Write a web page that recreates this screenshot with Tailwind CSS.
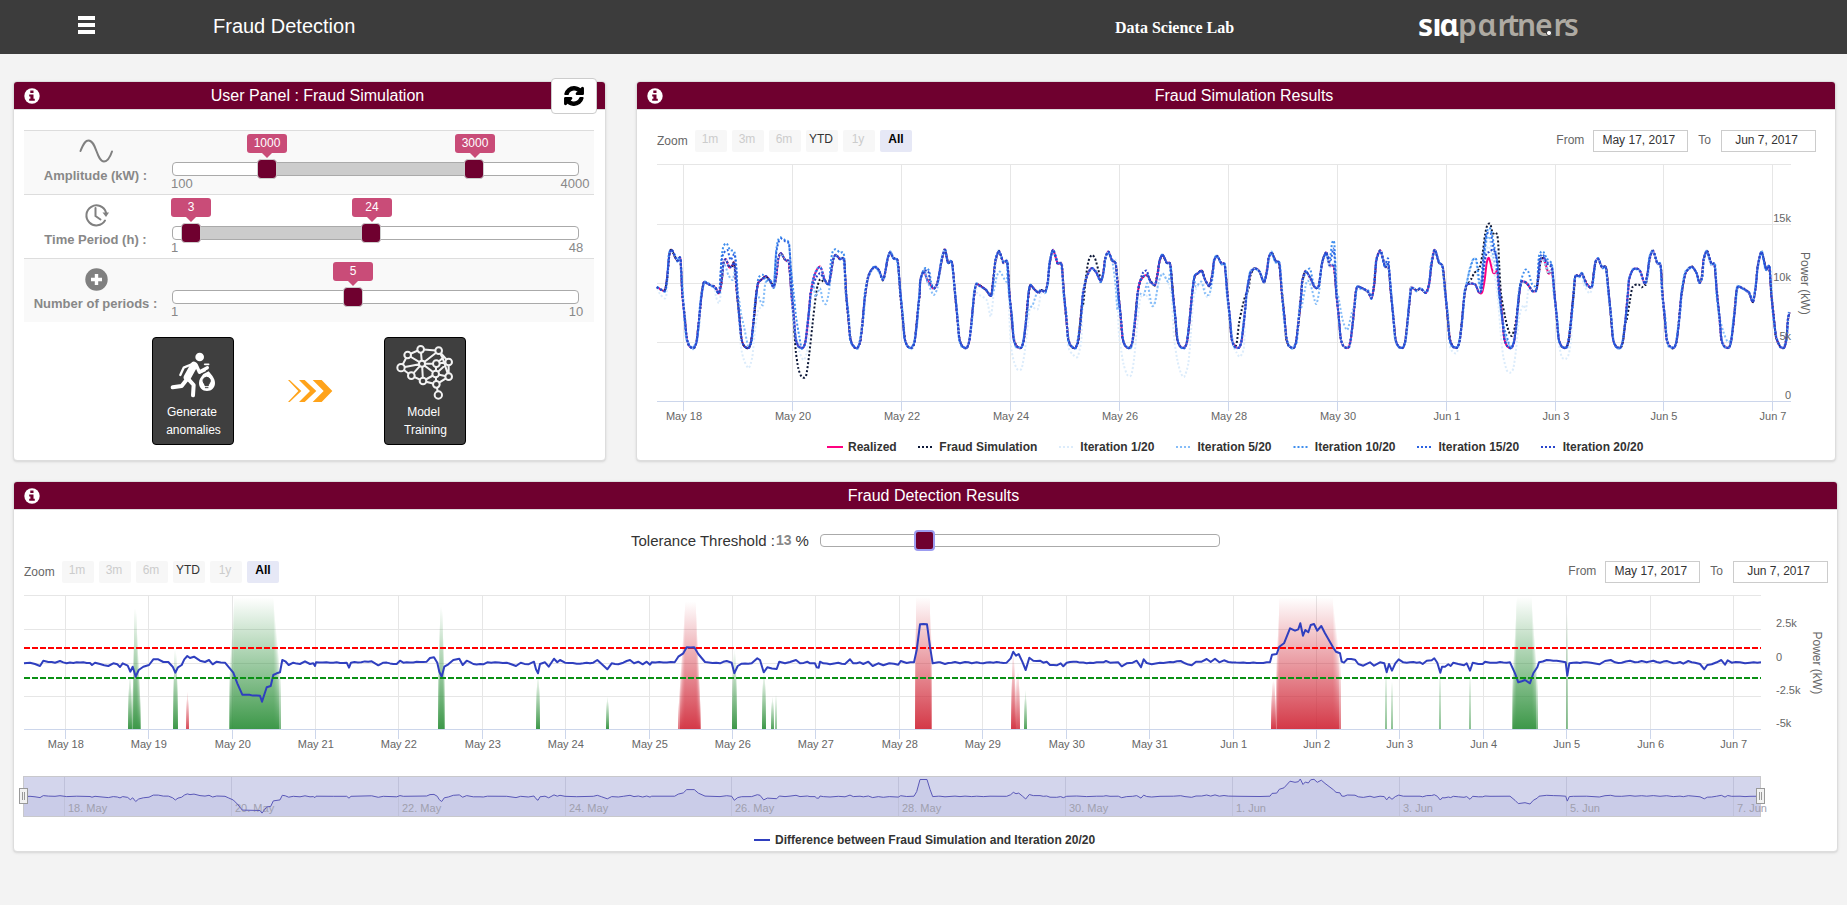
<!DOCTYPE html>
<html lang="en">
<head>
<meta charset="utf-8">
<title>Fraud Detection</title>
<script src="https://cdn.jsdelivr.net/npm/@tailwindcss/browser@4"></script>
</head>
<body class="min-h-[905px] bg-[#f3f3f3] font-['Liberation_Sans',Arial,sans-serif] text-[#333] overflow-hidden">

<header class="flex h-[54px] items-center bg-[#3c3c3c] text-white">
  <svg class="ml-[78px] -mt-[4px] block" width="17" height="18" viewBox="0 0 17 18"><path d="M0 0h17v4H0zM0 7h17v4H0zM0 14h17v4H0z" fill="#fff"/></svg>
  <h1 class="ml-[118px] -mt-[2px] w-[902px] text-[20px] leading-6">Fraud Detection</h1>
  <div class="mt-[2px] w-[303px] font-['Liberation_Serif',serif] text-[16px] font-bold leading-5">Data Science Lab</div>
  <svg class="block overflow-visible" width="162" height="54" viewBox="1417 0 162 54" font-family="Noto Sans, sans-serif" font-weight="600" font-size="30">
    <text x="1417 1431.500 1438.500" y="35.500" fill="#fff" font-weight="700">sıɑ</text>
    <text x="1457 1476.500 1496.500 1506 1516 1534 1552.500 1563" y="35.500" fill="#aeaaa2">pɑrtners</text>
    <circle cx="1548" cy="33" r="2.6" fill="#fff" stroke="#3c3c3c" stroke-width="1"/>
  </svg>
</header>

<main class="pt-[27px] pl-[13px]">
  <div class="flex gap-[30px]">
    <!-- user panel -->
    <section class="h-[380px] w-[593px] rounded border border-[#dddddd] bg-white shadow-sm">
      <div class="flex h-[28px] items-center rounded-t-[3px] border-b border-[#dddddd] bg-[#6f002f] px-[10px] text-white relative">
        <svg class="block" width="16" height="16" viewBox="0 0 16 16"><circle cx="8" cy="8" r="7.7" fill="#fff"/><path d="M6.3 2.6h3.2v2.3H6.3zM5.2 6.4h4.3v4.4h1.3v2H5.2v-2h1.2V8.400H5.2z" fill="#6f002f"/></svg>
        <h2 class="flex-1 text-center text-[16px] leading-5">User Panel : Fraud Simulation</h2>
        <button class="absolute -top-[4px] right-[8px] flex h-[36px] w-[46px] items-center justify-center rounded border border-[#ccc] bg-white">
          <svg width="20" height="20" viewBox="-60 -60 1656 1656"><path fill="#000" stroke="#000" stroke-width="110" stroke-linejoin="round" d="M1511 928q0 5-1 7-64 268-268 434.5T764 1536q-146 0-282.500-55T238 1324l-129 129q-19 19-45 19t-45-19-19-45V960q0-26 19-45t45-19h448q26 0 45 19t19 45-19 45l-137 137q71 66 161 102t187 36q134 0 250-65t186-179q11-17 53-117 8-23 30-23h192q13 0 22.500 9.500t9.500 22.500zM1536 128v448q0 26-19 45t-45 19h-448q-26 0-45-19t-19-45 19-45l138-138Q969 256 768 256q-134 0-250 65T332 500q-11 17-53 117-8 23-30 23H50q-13 0-22.500-9.500T18 608v-7q65-268 270-434.500T768 0q146 0 284 55.500T1297 212l130-129q19-19 45-19t45 19 19 45z"/></svg>
        </button>
      </div>
      <div class="mt-[20px] ml-[10px] w-[570px] text-[13px] text-[#888]">
        <div class="flex h-[64px] border-t border-[#dddddd] bg-[#f9f9f9]">
          <div class="flex w-[143px] flex-col items-center pt-[8px]">
            <svg class="ml-[2px]" width="35" height="24" viewBox="0 0 35 24" fill="none" stroke="#808080" stroke-width="2" stroke-linecap="round"><path d="M1.500 12C5 3 7 1.500 9.500 1.500c8 0 8 21 15.500 21 4 0 6-4 8-10"/></svg>
            <div class="mt-[5px] font-bold leading-4">Amplitude (kW) :</div>
          </div>
          <div class="relative ml-[5px] mt-[31px] h-[14px] w-[407px] rounded border border-[#aaa] bg-white">
            <div class="absolute top-0 left-[94px] h-[12px] w-[208px] bg-[#ccc]"></div>
            <div class="absolute -top-[4px] left-[84px] size-[20px] rounded border border-[#ccc] bg-[#6f002f]"></div>
            <div class="absolute -top-[4px] left-[291px] size-[20px] rounded border border-[#ccc] bg-[#6f002f]"></div>
            <div class="absolute -top-[29px] left-[74px] h-[19px] w-[40px] rounded-[3px] bg-[#c94c78] text-center text-[12px] leading-[18px] text-white">1000<svg class="absolute top-[19px] left-[15px]" width="10" height="5"><path d="M0 0h10L5 5z" fill="#c94c78"/></svg></div>
            <div class="absolute -top-[29px] left-[282px] h-[19px] w-[40px] rounded-[3px] bg-[#c94c78] text-center text-[12px] leading-[18px] text-white">3000<svg class="absolute top-[19px] left-[15px]" width="10" height="5"><path d="M0 0h10L5 5z" fill="#c94c78"/></svg></div>
            <div class="absolute top-[13px] -left-[2px] leading-4">100</div>
            <div class="absolute top-[13px] left-[382px] w-[40px] text-center leading-4">4000</div>
          </div>
        </div>
        <div class="flex h-[64px] border-t border-[#dddddd] bg-white">
          <div class="flex w-[143px] flex-col items-center pt-[8px]">
            <svg class="ml-px" width="26" height="24" viewBox="0 0 26 24" fill="none" stroke="#808080" stroke-width="2" stroke-linecap="round"><path d="M22 17.500A10 10 0 1 1 23 9.500"/><path d="M12.500 5v8l5 3.500"/><path d="M19.500 9.500h6.500l-3 4.500z" fill="#808080" stroke="none"/></svg>
            <div class="mt-[5px] font-bold leading-4">Time Period (h) :</div>
          </div>
          <div class="relative ml-[5px] mt-[31px] h-[14px] w-[407px] rounded border border-[#aaa] bg-white">
            <div class="absolute top-0 left-[18px] h-[12px] w-[180px] bg-[#ccc]"></div>
            <div class="absolute -top-[4px] left-[8px] size-[20px] rounded border border-[#ccc] bg-[#6f002f]"></div>
            <div class="absolute -top-[4px] left-[188px] size-[20px] rounded border border-[#ccc] bg-[#6f002f]"></div>
            <div class="absolute -top-[29px] -left-[2px] h-[19px] w-[40px] rounded-[3px] bg-[#c94c78] text-center text-[12px] leading-[18px] text-white">3<svg class="absolute top-[19px] left-[15px]" width="10" height="5"><path d="M0 0h10L5 5z" fill="#c94c78"/></svg></div>
            <div class="absolute -top-[29px] left-[179px] h-[19px] w-[40px] rounded-[3px] bg-[#c94c78] text-center text-[12px] leading-[18px] text-white">24<svg class="absolute top-[19px] left-[15px]" width="10" height="5"><path d="M0 0h10L5 5z" fill="#c94c78"/></svg></div>
            <div class="absolute top-[13px] -left-[2px] leading-4">1</div>
            <div class="absolute top-[13px] left-[383px] w-[40px] text-center leading-4">48</div>
          </div>
        </div>
        <div class="flex h-[64px] border-t border-[#dddddd] bg-[#f9f9f9]">
          <div class="flex w-[143px] flex-col items-center pt-[8px]">
            <svg width="24" height="24" viewBox="0 0 24 24"><circle cx="12.500" cy="12.500" r="11.200" fill="#808080"/><path d="M12.500 7v11M7 12.500h11" stroke="#fff" stroke-width="3.400"/></svg>
            <div class="mt-[5px] font-bold leading-4">Number of periods :</div>
          </div>
          <div class="relative ml-[5px] mt-[31px] h-[14px] w-[407px] rounded border border-[#aaa] bg-white">
            <div class="absolute -top-[4px] left-[170px] size-[20px] rounded border border-[#ccc] bg-[#6f002f]"></div>
            <div class="absolute -top-[29px] left-[160px] h-[19px] w-[40px] rounded-[3px] bg-[#c94c78] text-center text-[12px] leading-[18px] text-white">5<svg class="absolute top-[19px] left-[15px]" width="10" height="5"><path d="M0 0h10L5 5z" fill="#c94c78"/></svg></div>
            <div class="absolute top-[13px] -left-[2px] leading-4">1</div>
            <div class="absolute top-[13px] left-[383px] w-[40px] text-center leading-4">10</div>
          </div>
        </div>
      </div>
      <div class="mt-[15px] flex items-start pl-[138px]">
        <button class="flex h-[108px] w-[82px] flex-col items-center rounded border border-black bg-[#3f3f3f] text-[12px] leading-[18px] text-white">
          <svg class="mt-[12px] block" width="48" height="50" viewBox="75 48 144 150" fill="none" stroke="#fff" stroke-linecap="round" stroke-linejoin="round">
            <circle cx="167" cy="69" r="13" fill="#fff" stroke="none"/>
            <path d="M150 94L130 130" stroke-width="22"/><path d="M158 96l8 18 24-13" stroke-width="10"/>
            <path d="M145 90l-26 11-10 22" stroke-width="7"/><path d="M129 136l-16 20-27 4" stroke-width="12"/><path d="M131 133l18 20-2 31" stroke-width="12"/>
            <path d="M182 91h12" stroke-width="5"/><path d="M166 118l18-8" stroke-width="4"/>
            <path d="M178 120l16-8c10 12 19 22 19 35 0 14-10 24-24 24s-24-10-24-24c0-10 6-18 13-27z" fill="#fff" stroke="none"/>
            <path d="M188 130c7 0 11 5 11 10 0 6-5 8-6 15h-10c-1-7-6-9-6-15 0-5 4-10 11-10z" stroke="#3f3f3f" stroke-width="3" fill="#3f3f3f"/>
            <path d="M184 161h8" stroke="#3f3f3f" stroke-width="3"/>
          </svg>
          <span class="mt-[3px] block -ml-[2px]">Generate</span><span class="block ml-px">anomalies</span>
        </button>
        <svg class="mt-[42px] ml-[53px] block" width="46" height="25" viewBox="426 139 138 75" fill="#ffa31a"><path d="M429 142h5l35 33-35 33h-5l31-33z"/><path d="M462 142h17l35 33-35 33h-17l33-33z"/><path d="M503 142h27l32 33-32 33h-27l33-33z"/></svg>
        <button class="ml-[51px] flex h-[108px] w-[82px] flex-col items-center rounded border border-black bg-[#3f3f3f] text-[12px] leading-[18px] text-white">
          <svg class="mt-[6px] block" width="58" height="56" viewBox="753 36 174 168" stroke="#f2f2f2" stroke-width="6" fill="#3f3f3f">
            <path fill="none" d="M788 69L827 52 881 56 911 90V134L874 157 834 147 799 131 768 107ZM831 95L788 69M831 95L827 52M831 95L881 56M831 95L768 107M831 95L799 131M831 95L834 147M831 95L872 126M831 95H874M874 95L911 90M874 95L872 126M881 56L893 78 874 95M872 126L911 90M872 126L911 134M872 126L834 147M872 126L874 157 880 189M893 78L911 134"/>
            <circle cx="827" cy="52" r="10"/><circle cx="881" cy="56" r="10"/><circle cx="788" cy="69" r="10"/><circle cx="768" cy="107" r="11"/><circle cx="831" cy="95" r="9"/><circle cx="874" cy="95" r="10"/><circle cx="911" cy="90" r="10"/><circle cx="799" cy="131" r="10"/><circle cx="834" cy="147" r="10"/><circle cx="872" cy="126" r="10"/><circle cx="911" cy="134" r="10"/><circle cx="874" cy="157" r="10"/><circle cx="880" cy="189" r="11"/>
          </svg>
          <span class="mt-[3px] block -ml-[3px]">Model</span><span class="block ml-px">Training</span>
        </button>
      </div>
    </section>

    <!-- simulation chart -->
    <section class="h-[380px] w-[1200px] rounded border border-[#dddddd] bg-white shadow-sm">
      <div class="flex h-[28px] items-center rounded-t-[3px] border-b border-[#dddddd] bg-[#6f002f] px-[10px] text-white">
        <svg class="block" width="16" height="16" viewBox="0 0 16 16"><circle cx="8" cy="8" r="7.700" fill="#fff"/><path d="M6.300 2.600h3.200v2.300H6.300zM5.200 6.400h4.300v4.400h1.300v2H5.200v-2h1.200V8.400H5.200z" fill="#6f002f"/></svg>
        <h2 class="flex-1 text-center text-[16px] leading-5">Fraud Simulation Results</h2>
      </div>
      <div class="mt-[20px] flex h-[22px] items-start gap-[5px] pr-[19px] pl-[20px] text-center text-[12px] leading-[19px] text-[#ccc]">
        <span class="mt-px w-[33px] text-left leading-[20px] text-[#666]">Zoom</span>
        <span class="h-[22px] w-[32px] rounded-xs bg-[#f7f7f7] pr-[2px]">1m</span>
        <span class="h-[22px] w-[32px] rounded-xs bg-[#f7f7f7] pr-[2px]">3m</span>
        <span class="h-[22px] w-[32px] rounded-xs bg-[#f7f7f7] pr-[2px]">6m</span>
        <span class="h-[22px] w-[32px] rounded-xs bg-[#f7f7f7] pr-[2px] text-[#333]">YTD</span>
        <span class="h-[22px] w-[32px] rounded-xs bg-[#f7f7f7] pr-[2px]">1y</span>
        <span class="h-[22px] w-[32px] rounded-xs bg-[#e6e8f6] font-bold text-black">All</span>
        <span class="ml-auto mr-[4px] leading-[20px] text-[#666]">From</span>
        <span class="h-[22px] w-[95px] border border-[#ccc] pr-[4px] leading-[18px] text-[#333]">May 17, 2017</span>
        <span class="mx-[5px] leading-[20px] text-[#666]">To</span>
        <span class="h-[22px] w-[95px] border border-[#ccc] pr-[4px] leading-[18px] text-[#333]">Jun 7, 2017</span>
      </div>
      <svg id="sim" class="block" width="1198" height="308" viewBox="637 152 1198 308"></svg>
    </section>
  </div>

  <!-- detection chart -->
  <section class="mt-[20px] h-[371px] w-[1825px] rounded border border-[#dddddd] bg-white shadow-sm">
    <div class="flex h-[28px] items-center rounded-t-[3px] border-b border-[#dddddd] bg-[#6f002f] px-[10px] text-white">
      <svg class="block" width="16" height="16" viewBox="0 0 16 16"><circle cx="8" cy="8" r="7.700" fill="#fff"/><path d="M6.300 2.600h3.200v2.300H6.300zM5.200 6.400h4.300v4.400h1.300v2H5.200v-2h1.200V8.400H5.200z" fill="#6f002f"/></svg>
      <h2 class="flex-1 text-center text-[16px] leading-5">Fraud Detection Results</h2>
    </div>
    <div class="mt-[20px] flex h-[20px] items-center pl-[617px] text-[15px] leading-5">
      <div class="flex w-[189px] shrink-0 items-center">
        <span class="mt-px whitespace-nowrap">Tolerance Threshold :</span><span class="ml-px text-[14px] font-bold text-[#888]">13</span><span class="mt-px ml-[4px]">%</span>
      </div>
      <div class="relative h-[13px] w-[400px] rounded border border-[#aaa] bg-white">
        <div class="absolute -top-[5px] left-[93px] size-[21px] rounded border-2 border-[#9c9cf0] bg-[#6f002f]"></div>
      </div>
    </div>
    <div class="mt-[11px] flex h-[22px] items-start gap-[5px] pr-[9px] pl-[10px] text-center text-[12px] leading-[19px] text-[#ccc]">
      <span class="mt-px w-[33px] text-left leading-[20px] text-[#666]">Zoom</span>
      <span class="h-[22px] w-[32px] rounded-xs bg-[#f7f7f7] pr-[2px]">1m</span>
      <span class="h-[22px] w-[32px] rounded-xs bg-[#f7f7f7] pr-[2px]">3m</span>
      <span class="h-[22px] w-[32px] rounded-xs bg-[#f7f7f7] pr-[2px]">6m</span>
      <span class="h-[22px] w-[32px] rounded-xs bg-[#f7f7f7] pr-[2px] text-[#333]">YTD</span>
      <span class="h-[22px] w-[32px] rounded-xs bg-[#f7f7f7] pr-[2px]">1y</span>
      <span class="h-[22px] w-[32px] rounded-xs bg-[#e6e8f6] font-bold text-black">All</span>
      <span class="ml-auto mr-[4px] leading-[20px] text-[#666]">From</span>
      <span class="h-[22px] w-[95px] border border-[#ccc] pr-[4px] leading-[18px] text-[#333]">May 17, 2017</span>
      <span class="mx-[5px] leading-[20px] text-[#666]">To</span>
      <span class="h-[22px] w-[95px] border border-[#ccc] pr-[4px] leading-[18px] text-[#333]">Jun 7, 2017</span>
    </div>
    <svg id="det" class="block" width="1823" height="268" viewBox="14 583 1823 268"></svg>
  </section>
</main>

<script>
const L=(x1,y1,x2,y2,c,w=1,extra='')=>`<line x1="${x1}" y1="${y1}" x2="${x2}" y2="${y2}" stroke="${c}" stroke-width="${w}" ${extra}/>`;
const T=(x,y,s,size=11,fill='#666',extra='')=>`<text x="${x}" y="${y}" font-size="${size}" fill="${fill}" ${extra}>${s}</text>`;

/* ---------- simulation chart ---------- */
{
  let o='';
  const vx=[683.5,792.5,901.5,1010.5,1119.5,1228.5,1337.5,1446.5,1555.5,1663.5,1772.5];
  const vl=['May 18','May 20','May 22','May 24','May 26','May 28','May 30','Jun 1','Jun 3','Jun 5','Jun 7'];
  [164.5,224.5,283.5,342.5].forEach(y=>o+=L(657,y,1791,y,'#e6e6e6'));
  vx.forEach((x,i)=>{o+=L(x,164,x,401,'#e6e6e6')+L(x,401,x,411,'#ccd6eb')+T(x+.5,420,vl[i],11,'#666','text-anchor="middle"')});
  o+=L(657,401.5,1791,401.5,'#ccd6eb');

  // one row per day: [start, [offset, value] ...] from morning to evening
  const days=[
   [130,[62,397],[75,402],[95,412],[107,430],[115,395],[120,340],[128,328],[138,352],[146,348],[153,340]],
   [294,[61,398],[72,388],[83,379],[95,390],[108,410],[115,375],[121,325],[129,310],[139,326],[146,333],[153,338]],
   [457,[64,385],[74,358],[84,350],[92,372],[98,392],[109,403],[116,370],[122,330],[130,315],[143,327],[155,330]],
   [621,[62,385],[72,362],[84,350],[96,362],[108,390],[116,360],[121,330],[129,307],[140,325],[152,334]],
   [784,[57,390],[68,363],[78,390],[96,416],[108,400],[116,360],[122,325],[131,299],[140,338],[152,338]],
   [948,[60,403],[72,407],[90,420],[105,437],[112,390],[119,330],[129,303],[142,338],[154,336]],
   [1111,[60,405],[72,418],[84,428],[94,420],[104,426],[112,400],[118,340],[128,300],[142,340],[154,343]],
   [1274.5,[66,378],[80,355],[95,368],[108,394],[116,365],[121,328],[130,305],[142,332],[153,342]],
   [1438,[62,395],[72,380],[84,376],[94,395],[107,405],[115,370],[121,332],[130,315],[142,338],[153,344]],
   [1601.6,[62,380],[72,370],[84,362],[94,390],[107,408],[116,370],[121,332],[130,318],[142,340],[153,346]],
   [1765,[66,370],[80,355],[94,366],[107,397],[116,360],[121,325],[130,308],[142,334],[153,342]],
   [1929,[58,395],[67,363],[82,385],[96,412],[107,408],[116,345],[122,322],[130,308],[140,346],[153,350]],
   [2092,[60,410],[72,414],[92,425],[103,444],[111,400],[117,330],[130,302],[143,350],[153,345]],
   [2256,[58,412],[74,421],[86,416],[102,428],[112,400],[118,345],[128,299],[141,338],[152,350]],
   [2419,[62,403],[86,403],[97,426],[107,428],[115,390],[121,340],[128,324],[140,367],[148,368],[153,365]],
   [2582.7,[62,395],[78,400],[95,423],[107,418],[114,370],[119,335],[128,325],[143,370],[153,362]],
   [2746,[60,378],[72,380],[80,370],[94,402],[109,412],[116,365],[121,335],[129,327],[140,352],[152,353]],
   [2909,[58,390],[68,361],[80,355],[92,365],[105,401],[114,370],[120,325],[130,302],[143,340],[153,346]],
   [3070,[66,370],[85,350],[100,370],[108,398],[116,380],[121,330],[131,303],[144,342],[154,345]],
   [3234,[60,410],[80,418],[94,430],[105,456],[113,410],[119,350],[131,305],[144,358],[154,350]]
  ];
  const base=[[51,412],[62,418],[75,421],[82,380],[88,312],[95,300],[107,324],[113,332],[121,327]];
  days.forEach(([s,...p])=>{
    [[-3,430],[4,500],[10,565],[18,588],[28,594],[34,591],[40,572],[46,522],[51,470],[55,430]].forEach(([a,b])=>base.push([s+a,b]));
    p.forEach(([a,b])=>base.push([s+a,b]));
  });
  [[3394,430],[3401,500],[3408,560],[3420,589],[3428,594],[3434,590],[3440,560],[3444,510],[3448,487]].forEach(p=>base.push(p));

  const sh=(k,a)=>a.map(([x,y])=>[x+k,y]);
  const make=(ovs,j,ph)=>{
    let pts=base.map(([x,y],i)=>[x+j*Math.sin(i*1.9+ph)*.5,y+j*Math.sin(i*2.3+ph)]);
    ovs.forEach(o=>{const a=o[0][0],b=o[o.length-1][0];pts=pts.filter(p=>p[0]<a-2||p[0]>b+2).concat(o)});
    pts.sort((p,q)=>p[0]-q[0]);
    let d=`M${pts[0]}`;
    for(let i=0;i<pts.length-1;i++){
      const p0=pts[i-1]||pts[i],p1=pts[i],p2=pts[i+1],p3=pts[i+2]||p2;
      d+=`C${[p1[0]+(p2[0]-p0[0])/8,p1[1]+(p2[1]-p0[1])/8,p2[0]-(p3[0]-p1[0])/8,p2[1]-(p3[1]-p1[1])/8].map(v=>v.toFixed(1))},${p2}`;
    }
    return d;
  };
  const fraud=[
   [[452,400],[460,500],[467,600],[475,655],[485,680],[498,678],[508,610],[520,500],[530,420],[540,388],[550,395]],
   sh(1200,[[130,460],[138,380],[145,335],[155,315],[165,325],[175,360],[183,390]]),
   sh(1200,[[590,580],[597,520],[605,480],[615,440],[625,420],[632,375]]),
   sh(2370,[[113,403],[125,385],[133,368],[143,362],[150,350],[158,310],[165,255],[172,225],[181,222],[188,250],[198,248],[204,270],[208,350],[213,430],[225,500],[235,540],[245,558],[255,530],[262,480]]),
   sh(2370,[[590,510],[600,450],[608,410],[625,403],[635,412],[643,404],[648,403]])];
  const it1=[
   [[60,432],[76,445],[82,410]],[[228,440],[237,460],[244,420]],
   [[296,500],[303,590],[312,630],[326,654],[337,620],[345,540],[355,480],[370,465],[376,400]],
   [[470,570],[478,605],[490,630],[500,610],[506,560]],
   [[1012,430],[1040,450],[1052,500],[1060,440]],
   [[1108,500],[1113,590],[1122,635],[1133,659],[1145,655],[1155,600],[1164,520],[1172,470],[1193,478],[1203,430]],
   sh(1200,[[85,590],[100,615],[113,620],[124,570]]),
   sh(1200,[[236,540],[242,590],[250,640],[262,675],[274,674],[283,620],[292,520],[300,450],[312,430],[325,445],[338,470],[348,440],[360,380],[368,372],[385,400],[395,440],[402,560],[412,630],[423,670],[433,680],[445,640],[452,560],[460,450],[472,410],[490,400],[500,440],[510,430]]),
   sh(1200,[[577,580],[590,608],[600,620],[612,590]]),
   sh(2370,[[60,590],[78,610],[90,575]]),
   sh(2370,[[156,380],[166,310],[177,290],[190,350],[203,440],[213,560],[220,620],[230,660],[240,668],[250,655],[258,600],[268,500],[280,465],[288,480],[295,420]]),
   sh(2370,[[385,570],[395,620],[407,627],[417,610],[424,560]]),
   sh(2370,[[460,400],[478,430],[488,410]])];
  const it5=[
   [[244,400],[252,340],[265,375],[278,390],[286,360]],
   [[296,440],[303,490],[312,530],[322,580]],[[356,440],[368,465],[376,400]],
   [[526,440],[540,415],[548,450],[558,462],[566,430]],
   [[865,400],[880,435],[892,415]],[[1062,420],[1070,380],[1080,365],[1100,395]],[[1165,480],[1178,465],[1190,430]],
   sh(1200,[[226,400],[232,480]]),
   sh(1200,[[300,430],[312,435],[322,400],[335,465],[345,458],[355,400],[368,370],[385,395]]),
   sh(1200,[[468,410],[484,395],[495,430],[505,435],[512,420]]),
   sh(1200,[[785,470],[800,395],[812,405],[828,462],[838,420]]),
   sh(1200,[[895,440],[908,510],[922,540],[935,490],[945,460]]),
   sh(2370,[[110,400],[118,360],[128,330],[138,330],[145,390],[155,425]]),
   sh(2370,[[158,370],[168,280],[178,260],[190,320],[200,370],[212,480],[225,555],[240,592]]),
   sh(2370,[[866,490],[880,545],[893,575],[905,566]])];
  const it10=[
   [[244,330],[250,290],[260,280],[270,300],[283,305],[289,350]],
   [[408,310],[413,275],[420,262],[435,270],[447,280],[452,350]],
   [[355,385],[368,374],[378,392]],[[462,440],[468,500],[478,560]],
   [[572,340],[578,305],[587,298],[600,308],[612,315]],
   [[850,360],[858,354],[868,364],[873,395]],
   sh(1200,[[797,370],[810,356],[818,392]]),
   sh(1200,[[862,320],[869,335],[876,280],[883,280],[889,400]]),
   sh(2370,[[110,400],[118,365],[130,328],[140,332],[152,415],[165,290],[173,238],[183,240],[193,290],[203,340],[212,470],[222,530],[235,575]]),
   sh(2370,[[272,395],[285,360],[295,365],[305,400],[315,410]]),
   sh(2370,[[326,325],[332,307],[340,305],[350,325],[366,345]])];
  const it15=[
   [[244,340],[250,312],[262,300],[272,330],[283,312],[289,360]],
   [[408,315],[415,278],[424,266],[436,274],[447,284],[453,360]],
   sh(1200,[[862,315],[872,330],[880,296],[885,340]]),
   sh(1200,[[1033,345],[1044,325],[1048,360]]),
   sh(2370,[[152,420],[160,320],[169,255],[182,250],[190,290],[200,330],[208,440]]),
   sh(2370,[[328,330],[338,313],[350,335],[366,350]])];
  const it20=[
   [[521,400],[530,380],[540,370],[548,380],[555,392]],
   [[860,362],[866,368],[871,398]],
   sh(1200,[[300,395],[308,370],[320,362],[328,385]]),
   sh(2370,[[155,418],[162,350],[169,312],[178,306],[186,300],[194,305],[201,335],[208,430]]),
   sh(2370,[[330,330],[340,322],[355,345],[366,356]])];
  const cols=[['#ff0080',make([],0,0),''],['#0d1838',make(fraud,1.2,1),'6 6'],['#dcecfb',make(it1,3,2),'6 6'],['#86bdf8',make(it5,3.500,3),'6 6'],['#3f8eee',make(it10,2.500,4),'6 6'],['#2a62e2',make(it15,1.200,5),'6 6'],['#2844cc',make(it20,.8,6),'6 5']];
  o+='<g transform="translate(640 150) scale(.33333)" fill="none" stroke-width="6" stroke-linejoin="round">'+cols.map(c=>`<path d="${c[1]}" stroke="${c[0]}" stroke-dasharray="${c[2]||'none'}"/>`).join('')+'</g>';
  [['15k',222],['10k',281],['5k',340],['0',399]].forEach(([s,y])=>o+=T(1791,y,s,11,'#666','text-anchor="end"'));
  o+=T(0,0,'Power (kW)',12,'#666','transform="translate(1800.5 252) rotate(90)"');
  [[827,848,'Realized'],[918,939.3,'Fraud Simulation'],[1059,1080.3,'Iteration 1/20'],[1176,1197.5,'Iteration 5/20'],[1293.5,1314.8,'Iteration 10/20'],[1417,1438.5,'Iteration 15/20'],[1541,1562.7,'Iteration 20/20']].forEach(([a,b,s],i)=>{
    o+=L(a,447,a+16,447,cols[i][0],2,i?'stroke-dasharray="2 2"':'')+T(b,451,s,12,'#333','font-weight="700"')});
  document.getElementById('sim').innerHTML=o;
}

/* ---------- detection chart ---------- */
{
  let o='<defs><linearGradient id="g" x1="0" y1="0" x2="0" y2="1"><stop offset="0" stop-color="#2c8f39" stop-opacity="0"/><stop offset="1" stop-color="#2c8f39" stop-opacity=".92"/></linearGradient><linearGradient id="r" x1="0" y1="0" x2="0" y2="1"><stop offset="0" stop-color="#d02030" stop-opacity="0"/><stop offset="1" stop-color="#d02838" stop-opacity=".92"/></linearGradient></defs>';
  const vx=[65.5,148.5,232.5,315.5,398.5,482.5,565.5,649.5,732.5,815.5,899.5,982.5,1066.5,1149.5,1233.5,1316.5,1399.5,1483.5,1566.5,1650.5,1733.5];
  [595.5,629.5,663.5,696.5].forEach(y=>o+=L(24,y,1761,y,'#e6e6e6'));
  vx.forEach((x,i)=>{o+=L(x,595,x,729,'#e6e6e6')+L(x,729,x,739,'#ccd6eb')+T(x+.3,748,i<14?'May '+(18+i):'Jun '+(i-13),11,'#666','text-anchor="middle"')});
  o+=L(24,729.5,1761,729.5,'#ccd6eb');

  // [colour, left, right, inner left, inner right, top, edge top, opacity]
  const bars=[
   ['g',384,396,387,393,380,450,1],['g',396,423,403,409,175,470,1],['g',519,534,523,529,300,420,1],['r',558,567,561,564,425,470,.9],
   ['g',687,843,702,820,142,385,1],['g',1314,1335,1320,1327,170,380,1],
   ['g',1608,1620,1611,1617,380,440,1],['g',1818,1827,1821,1824,440,470,1],['r',2034,2103,2055,2088,155,480,1],
   ['g',2196,2211,2201,2206,300,400,1],['g',2286,2298,2289,2295,370,430,1],['g',2313,2322,2316,2319,440,470,.9],['g',2325,2331,2325,2331,435,435,.6],
   ['r',2745,2796,2749,2789,140,280,1],
   ['r',3033,3048,3038,3042,305,430,1],['r',3048,3060,3050,3056,365,430,.9],['g',3072,3081,3075,3078,420,470,.9],
   ['r',3813,3828,3818,3823,390,450,1],['r',3828,4023,3838,3998,142,350,1],
   ['g',4155,4161,4155,4161,360,360,.6],['g',4173,4179,4173,4179,395,395,.6],
   ['g',4317,4323,4317,4323,360,360,.6],['g',4407,4413,4407,4413,370,370,.6],['g',4536,4614,4550,4595,140,400,1],['g',4698,4704,4698,4704,190,190,.6]];
  o+='<g transform="translate(0 550) scale(.33333)" shape-rendering="crispEdges">';
  bars.forEach(([c,a,b,i0,i1,t,e,al])=>{
    for(let x=a;x<b;x+=3){
      const m=x+1.5;let f=m<i0?(i0-m)/(i0-a):m>i1?(m-i1)/(b-i1):0;
      const y=t+(e-t)*f, q=al*(f>.75?.72:1);
      o+=`<rect x="${x}" y="${y.toFixed(0)}" width="3" height="${(537-y).toFixed(0)}" fill="url(#${c})" opacity="${q}"/>`;
    }});
  o+='</g>';
  const z=(dx,dy,s)=>s.split(' ').map(p=>{const [x,y]=p.split(',').map(Number);return [x+dx,y+dy]});
  const raw=[
   ...z(0,0,'72,340 90,338 105,342 120,348 130,332 145,336 165,338 180,333 200,340 230,337 270,339 276,345 285,338 300,342 325,348 340,340 352,343 360,351 368,340 383,347 391,365 398,350 407,380 416,360 430,350 447,345 460,328 475,328 490,336 505,336 518,350 526,368 534,352 545,345 553,328 562,318 570,324 582,320 600,332 615,336 627,330 638,343 650,335 675,338 685,350 700,368 712,400 727,434 780,437 786,455 800,412 812,408 820,375 840,367 847,330 856,334 866,345 880,338 900,342 915,334 930,342 940,340 945,348 948,337 1000,338 1040,338 1047,353 1053,338 1115,334 1135,346 1150,338 1190,342 1200,332 1210,338 1280,335 1290,324 1302,322 1312,338 1318,365 1325,380 1333,350 1345,343 1360,330 1378,326 1388,345 1400,332 1420,342 1440,342'),
   ...z(1410,-120,'40,463 52,457 110,458 138,468 152,458 175,463 192,455 198,478 204,490 210,462 225,457 236,470 252,446 262,457 270,450 285,458 320,461 370,458 382,450 395,462 412,478 425,460 445,463 460,458 480,450 492,460 505,455 518,463 530,455 540,464 545,457 614,457 625,440 640,430 650,412 673,412 685,432 705,456 750,460 770,453 785,458 793,490 803,468 815,461 845,460 862,445 870,450 881,487 892,472 920,477 928,455 945,460 960,456 978,450 990,460 1012,455 1020,460 1035,460 1040,472 1046,473 1050,455 1060,460 1080,463 1105,458 1125,462 1140,448 1150,460 1170,457 1180,462 1195,455 1208,468 1225,460 1240,466 1258,460 1285,464 1292,453 1310,459 1332,457 1340,420 1350,343 1371,343 1380,410 1388,460 1405,457'),
   ...z(2820,-120,'0,457 15,462 45,456 60,460 75,456 95,460 110,457 130,460 150,457 200,458 212,445 220,425 228,437 236,432 247,455 257,480 268,443 280,452 300,452 310,458 320,455 330,465 350,466 362,460 370,469 380,458 410,455 440,460 470,457 490,457 498,453 510,458 535,457 545,469 560,460 578,458 590,452 603,472 611,448 620,459 635,463 660,458 700,457 722,453 735,460 755,466 768,455 785,455 800,447 812,456 825,446 838,457 852,451 865,456 900,458 960,459 990,457 996,434 1010,432 1018,410 1032,400 1050,355 1065,362 1075,358 1081,340 1089,377 1096,360 1105,367 1112,345 1122,342 1132,362 1144,348 1155,370 1180,413 1188,425 1200,430 1205,455 1212,458 1222,447 1245,449 1255,462 1270,467 1290,457 1302,467 1320,457 1333,460 1340,487 1347,462 1356,482 1366,460 1376,448 1390,457 1440,457'),
   ...z(4200,0,'68,342 80,332 95,331 103,325 112,338 121,368 126,350 135,350 145,343 152,348 160,338 175,342 192,346 200,340 210,362 218,338 235,342 248,342 255,335 270,338 330,337 345,370 355,397 375,390 390,400 400,370 412,352 417,337 440,330 460,332 480,334 497,337 502,377 508,340 520,338 560,337 598,343 615,333 632,330 645,337 665,338 690,332 705,337 725,333 740,337 760,332 780,338 800,333 820,340 840,336 850,341 865,333 885,338 900,342 913,358 922,345 935,343 950,337 964,330 975,344 983,331 995,338 1020,337 1035,340 1050,338 1083,337')];
  // fill long quiet stretches with small hourly variation
  const pts=[];
  raw.forEach((p,i)=>{
    if(i){const q=raw[i-1],n=Math.floor((p[0]-q[0])/10);
      if(Math.abs(p[1]-q[1])<12)for(let k=1;k<n;k++)pts.push([q[0]+(p[0]-q[0])*k/n,q[1]+(p[1]-q[1])*k/n+1.1*Math.sin((i*7+k*5)*2.1)]);}
    pts.push(p);
  });
  const P=(a,f)=>'M'+a.map(([x,y])=>(x/3).toFixed(1)+' '+f(y).toFixed(1)).join('L');
  o+=L(24,648,1761,648,'#f00',2,'stroke-dasharray="6 2"');
  o+=`<path d="${P(pts,y=>550+y/3)}" fill="none" stroke="#2f3fbf" stroke-width="2" stroke-linejoin="round"/>`;
  o+=L(24,678,1761,678,'#0a9014',2,'stroke-dasharray="6 2"');
  [['2.5k',627],['0',661],['-2.5k',694],['-5k',727]].forEach(([s,y])=>o+=T(1776,y,s));
  o+=T(0,0,'Power (kW)',12,'#666','transform="translate(1812.500 631.500) rotate(90)"');

  // navigator
  const nv=P(raw,y=>550+(739+(y-338)*(y<300?.44:y>400?.43:.37))/3);
  const nx=[64.5,231.5,398.5,565.5,731.5,898.5,1065.5,1232.5,1399.5,1566.5,1733.5],nl=['18. May','20. May','22. May','24. May','26. May','28. May','30. May','1. Jun','3. Jun','5. Jun','7. Jun'];
  o+='<rect x="23.5" y="776.5" width="1737" height="40" fill="#d3d5ec" stroke="#c8c8cc"/>';
  o+=`<path d="${nv}L1760 816L24 816Z" fill="#cacce8"/>`;
  nx.forEach((x,i)=>o+=L(x,777,x,816,'#bfc1da')+T(x+3.5,812,nl[i],11,'#a0a0ae'));
  o+=`<path d="${nv}" fill="none" stroke="#5a58b8" stroke-width="1"/>`;
  [19.5,1756.5].forEach(x=>o+=`<rect x="${x}" y="788.5" width="8" height="15" fill="#f2f2f2" stroke="#999"/>`+L(x+3,792,x+3,800,'#999')+L(x+5,792,x+5,800,'#999'));
  o+=L(754,840,770,840,'#2f3fbf',2)+T(775,844,'Difference between Fraud Simulation and Iteration 20/20',12,'#333','font-weight="700"');
  document.getElementById('det').innerHTML=o;
}
</script>
</body>
</html>
